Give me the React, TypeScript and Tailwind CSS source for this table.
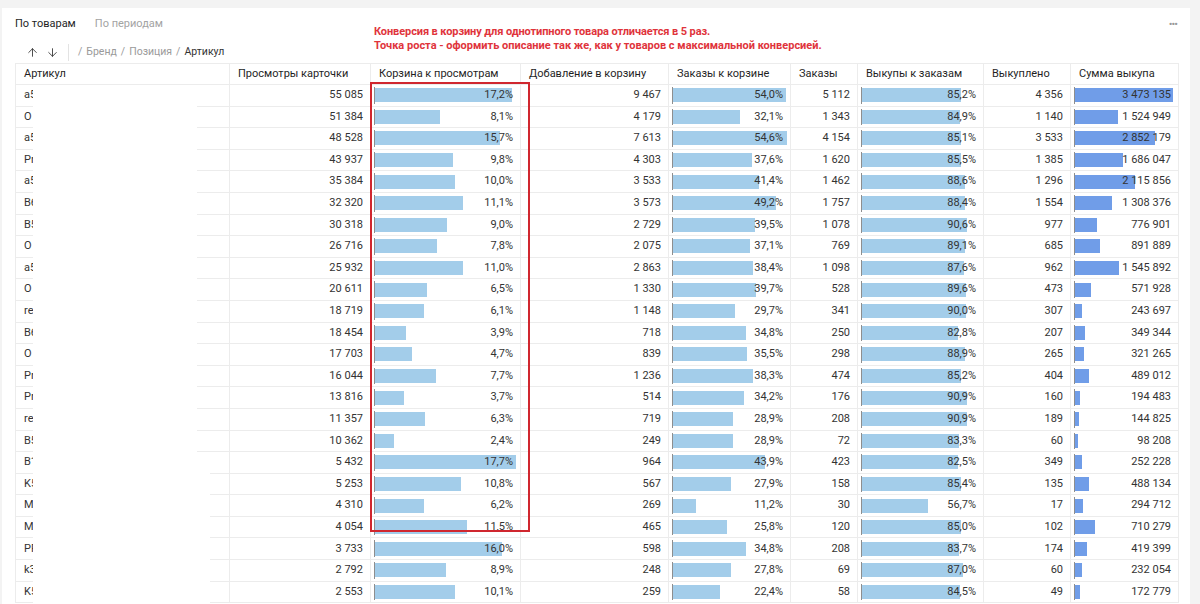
import { ArrowDown, ArrowUp } from "lucide-react";

const headers = [
  "Артикул",
  "Просмотры карточки",
  "Корзина к просмотрам",
  "Добавление в корзину",
  "Заказы к корзине",
  "Заказы",
  "Выкупы к заказам",
  "Выкуплено",
  "Сумма выкупа",
];

// art, views, cart/views, add to cart, orders/cart, orders, buyout/orders, bought, sum
const rows = [
  ["a5", "55 085", "17,2%", "9 467", "54,0%", "5 112", "85,2%", "4 356", "3 473 135"],
  ["O", "51 384", "8,1%", "4 179", "32,1%", "1 343", "84,9%", "1 140", "1 524 949"],
  ["a5", "48 528", "15,7%", "7 613", "54,6%", "4 154", "85,1%", "3 533", "2 852 179"],
  ["Pr", "43 937", "9,8%", "4 303", "37,6%", "1 620", "85,5%", "1 385", "1 686 047"],
  ["a5", "35 384", "10,0%", "3 533", "41,4%", "1 462", "88,6%", "1 296", "2 115 856"],
  ["B6", "32 320", "11,1%", "3 573", "49,2%", "1 757", "88,4%", "1 554", "1 308 376"],
  ["B5", "30 318", "9,0%", "2 729", "39,5%", "1 078", "90,6%", "977", "776 901"],
  ["O", "26 716", "7,8%", "2 075", "37,1%", "769", "89,1%", "685", "891 889"],
  ["a5", "25 932", "11,0%", "2 863", "38,4%", "1 098", "87,6%", "962", "1 545 892"],
  ["O", "20 611", "6,5%", "1 330", "39,7%", "528", "89,6%", "473", "571 928"],
  ["re", "18 719", "6,1%", "1 148", "29,7%", "341", "90,0%", "307", "243 697"],
  ["B6", "18 454", "3,9%", "718", "34,8%", "250", "82,8%", "207", "349 344"],
  ["O", "17 703", "4,7%", "839", "35,5%", "298", "88,9%", "265", "321 265"],
  ["Pr", "16 044", "7,7%", "1 236", "38,3%", "474", "85,2%", "404", "489 012"],
  ["Pr", "13 816", "3,7%", "514", "34,2%", "176", "90,9%", "160", "194 483"],
  ["re", "11 357", "6,3%", "719", "28,9%", "208", "90,9%", "189", "144 825"],
  ["B5", "10 362", "2,4%", "249", "28,9%", "72", "83,3%", "60", "98 208"],
  ["B1", "5 432", "17,7%", "964", "43,9%", "423", "82,5%", "349", "252 228"],
  ["K5", "5 253", "10,8%", "567", "27,9%", "158", "85,4%", "135", "488 134"],
  ["M", "4 310", "6,2%", "269", "11,2%", "30", "56,7%", "17", "294 712"],
  ["M", "4 054", "11,5%", "465", "25,8%", "120", "85,0%", "102", "710 279"],
  ["PF", "3 733", "16,0%", "598", "34,8%", "208", "83,7%", "174", "419 399"],
  ["k3", "2 792", "8,9%", "248", "27,8%", "69", "87,0%", "60", "232 054"],
  ["K5", "2 553", "10,1%", "259", "22,4%", "58", "84,5%", "49", "172 779"],
];

// bar settings per column index: max value and max bar width
const bars: Record<number, { max: number; maxW: number; color: string }> = {
  2: { max: 17.7, maxW: 141, color: "bg-[#a3cdea]" },
  4: { max: 54.6, maxW: 114, color: "bg-[#a3cdea]" },
  6: { max: 100, maxW: 116, color: "bg-[#a3cdea]" },
  8: { max: 3473135, maxW: 98, color: "bg-[#709de8]" },
};

const num = (s: string) => parseFloat(s.replace(/\s/g, "").replace(",", ".").replace("%", ""));

const gridCols = "grid grid-cols-[214px_141px_150px_148px_122px_67px_126px_87px_108px]";

function BarCell({ text, col }: { text: string; col: number }) {
  const b = bars[col];
  const w = Math.min(1, num(text) / b.max) * b.maxW;
  return (
    <div className="relative flex items-center justify-end border-r border-b border-[#ececec] pr-[7px]">
      <span className="absolute left-[3px] top-[2px] bottom-[2px] w-px bg-[#8e8e8e]" />
      <span
        className={`absolute left-[4px] top-1/2 -translate-y-1/2 h-[14px] ${b.color}`}
        style={{ width: w }}
      />
      <span className="relative">{text}</span>
    </div>
  );
}

function Row({ r, i }: { r: string[]; i: number }) {
  const gapEnd = i < 17 ? "w-[32px]" : "w-[19px]";
  return (
    <div className={`${gridCols} h-[21.6px] text-[11px] text-[#333]`}>
      {/* article cell, name is hidden in the source */}
      <div className="flex border-r border-[#ececec]">
        <div className="w-[17px] pl-2 overflow-hidden whitespace-nowrap border-b border-[#ececec] flex items-center">
          {r[0]}
        </div>
        <div className="flex-1" />
        <div className={`${gapEnd} border-b border-[#ececec]`} />
      </div>
      {r.slice(1).map((v, k) => {
        const col = k + 1;
        if (bars[col]) return <BarCell key={col} text={v} col={col} />;
        return (
          <div
            key={col}
            className="flex items-center justify-end border-r border-b border-[#ececec] pr-[7px]"
          >
            {v}
          </div>
        );
      })}
    </div>
  );
}

export default function App() {
  return (
    <div className="min-h-screen bg-[#f3f3f3] pt-2 pl-[2px] pr-[10px] font-['Roboto',sans-serif]">
      <div className="relative h-[596px] overflow-hidden bg-white px-[13px]">
        {/* tabs */}
        <div className="flex h-[33px] items-center justify-between">
          <div className="flex items-center gap-[19px] text-[11px]">
            <span className="text-[#1f1f1f]">По товарам</span>
            <span className="text-[#a3a3a3]">По периодам</span>
          </div>
          <span className="text-[11px] leading-none text-[#999] tracking-[-1px]">•••</span>
        </div>

        {/* toolbar */}
        <div className="flex h-[22px] items-center text-[10.5px]">
          <div className="flex items-center gap-[7px] pl-[11px] pr-[9px] text-[#333]">
            <ArrowUp size={13} strokeWidth={1.6} />
            <ArrowDown size={13} strokeWidth={1.6} />
          </div>
          <div className="h-[17px] w-px bg-[#e3e3e3]" />
          <div className="flex items-center gap-[4px] pl-[9px] text-[#9a9a9a]">
            <span>/</span>
            <span>Бренд</span>
            <span>/</span>
            <span>Позиция</span>
            <span>/</span>
            <span className="text-[#333]">Артикул</span>
          </div>
        </div>

        {/* table */}
        <div className="w-[1164px] border-l border-t border-[#ececec]">
          <div className={`${gridCols} h-[21px] text-[11px] text-[#1f1f1f]`}>
            {headers.map((h) => (
              <div key={h} className="flex items-center border-r border-b border-[#ececec] pl-2">
                {h}
              </div>
            ))}
          </div>
          {rows.map((r, i) => (
            <Row key={i} r={r} i={i} />
          ))}
        </div>

        {/* annotation */}
        <div className="absolute left-[372px] top-[17px] text-[11px] font-bold leading-[13.5px] text-[#e0343c]">
          <p className="tracking-[-0.1px]">Конверсия в корзину для однотипного товара отличается в 5 раз.</p>
          <p>Точка роста - оформить описание так же, как у товаров с максимальной конверсией.</p>
        </div>
        <div className="absolute left-[368px] top-[74px] h-[450px] w-[160px] border-2 border-[#d0272f]" />
      </div>
    </div>
  );
}
